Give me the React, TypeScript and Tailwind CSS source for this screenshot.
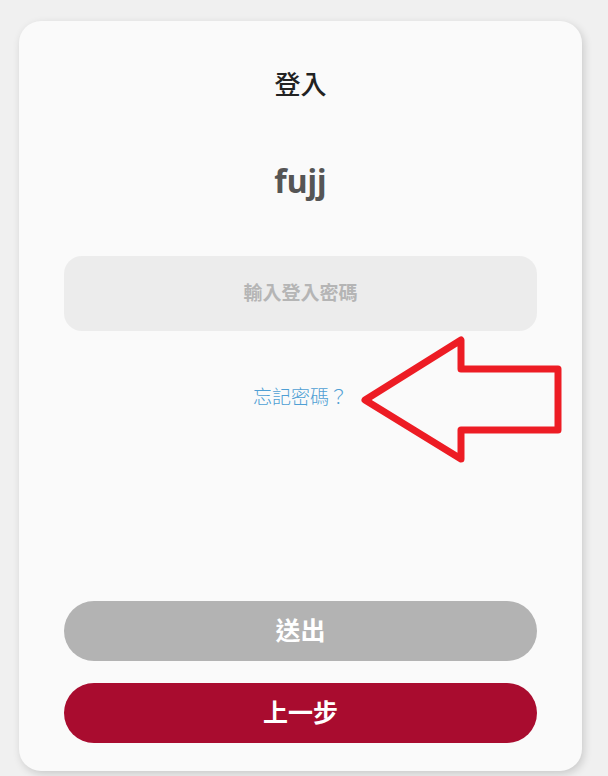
import React from "react";

export default function App() {
  const cjk = { fontFamily: '"Noto Sans", "Noto Sans CJK TC", sans-serif' };
  return (
    <div className="min-h-[776px] w-[608px] bg-[#f0f0f0] pt-[21px] pl-[19px]" style={cjk}>
      <div className="relative flex h-[750px] w-[563px] flex-col rounded-[22px] bg-[#fafafa] px-[45px] pt-[47px] pb-[28px] shadow-[2px_3px_8px_rgba(0,0,0,0.16)]">
        <h1 className="text-center text-[26px] leading-[32px] font-medium text-[#222]">登入</h1>
        <div className="mt-[59px] text-center text-[32px] leading-[44px] font-bold text-[#555]">fujj</div>
        <div className="mt-[53px] flex h-[75px] items-center justify-center rounded-[18px] bg-[#ececec]">
          <span className="text-[19px] font-bold text-[#b5b5b5]">輸入登入密碼</span>
        </div>
        <div className="mt-[52px] text-center text-[19px] leading-[28px] font-light text-[#4f9fd4]">忘記密碼？</div>
        <div className="mt-auto flex flex-col gap-[22px]">
          <button className="h-[60px] rounded-full bg-[#b3b3b3] text-[25px] font-bold text-white">送出</button>
          <button className="h-[60px] rounded-full bg-[#a90c2f] text-[25px] font-bold text-white">上一步</button>
        </div>
        <svg
          className="pointer-events-none absolute left-[331px] top-[309px]"
          width="240"
          height="160"
          viewBox="350 330 240 160"
        >
          <polygon
            points="365,400 461,340 461,369 558,369 558,430 461,430 461,459"
            fill="none"
            stroke="#ed1c24"
            strokeWidth="7"
            strokeLinejoin="round"
          />
        </svg>
      </div>
    </div>
  );
}
